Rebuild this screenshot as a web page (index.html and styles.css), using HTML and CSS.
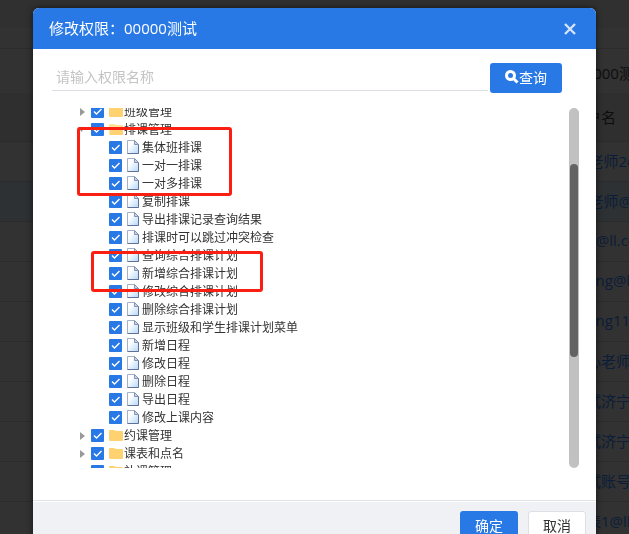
FILE: index.html
```html
<!DOCTYPE html>
<html lang="zh-CN">
<head>
<meta charset="utf-8">
<meta name="viewport" content="width=device-width, initial-scale=1">
<title>修改权限</title>
<link rel="stylesheet" href="styles.css">
</head>
<body>
<div class="page">
  <div class="page-top"></div>
  <div class="page-sub"></div>
  <div class="page-title">00000测试</div>
  <table class="users">
    <thead><tr><th>用户名</th></tr></thead>
    <tbody>
      <tr><td>an老师2@ll.com</td></tr>
      <tr class="current"><td>an老师@ll.com</td></tr>
      <tr><td>abc@ll.com</td></tr>
      <tr><td>zhang@ll.com</td></tr>
      <tr><td>zhang11@ll.com</td></tr>
      <tr><td>小心老师</td></tr>
      <tr><td>测试济宁</td></tr>
      <tr><td>测试济宁</td></tr>
      <tr><td>测试账号</td></tr>
      <tr><td>代表1@ll.com</td></tr>
    </tbody>
  </table>
</div>

<div class="mask">
  <section class="dialog" role="dialog" aria-labelledby="dialog-title">
    <header class="dialog-head">
      <h1 id="dialog-title">修改权限：00000测试</h1>
      <button class="close" type="button" aria-label="关闭"><svg viewBox="0 0 12 12" width="12" height="12"><path d="M1 1l10 10M11 1L1 11"/></svg></button>
    </header>
    <div class="dialog-body">
      <form class="search">
        <input class="search-input" type="text" placeholder="请输入权限名称" aria-label="权限名称">
        <button class="btn btn-primary btn-search" type="button"><svg viewBox="0 0 14 14" width="14" height="14"><circle cx="5.5" cy="5.5" r="4"/><path d="M8.5 8.5l4 4"/></svg>查询</button>
      </form>
      <div class="tree-panel">
        <div class="tree-view"><ul class="tree" id="tree"></ul></div>
        <div class="scrollbar"><div class="thumb"></div></div>
        <div class="mark mark-group"></div>
        <div class="mark mark-item"></div>
      </div>
    </div>
    <footer class="dialog-foot">
      <button class="btn btn-primary" type="button">确定</button>
      <button class="btn btn-plain" type="button">取消</button>
    </footer>
  </section>
</div>
<script src="tree.js"></script>
</body>
</html>
```
FILE: styles.css
```css
* { box-sizing: border-box; }

body {
  margin: 0;
  height: 100vh;
  overflow: hidden;
  background: #323232;
  color: #333;
  font-family: "Open Sans", "Noto Sans CJK SC", sans-serif;
  font-size: 14px;
}

button, input { font: inherit; }

/* Dimmed page behind the dialog */
.page { color: #0d0d0d; font-size: 15px; }
.page-top { height: 28px; background: #303030; }
.page-sub { height: 21px; border-bottom: 1px solid #2c2c2c; }
.page-title { height: 44px; padding-left: 576px; line-height: 48px; white-space: nowrap; }
.users { width: 100%; border-collapse: collapse; table-layout: fixed; }
.users th, .users td {
  height: 40px;
  padding: 0 0 2px 571px;
  border-bottom: 1px solid #2b2b2b;
  overflow: hidden;
  text-align: left;
  font-weight: normal;
  white-space: nowrap;
}
.users th { height: 48px; padding-bottom: 0; background: #2f2f2f; }
.users td { color: #0b1d38; }
.users .current { background: #2d3133; }

/* Dialog */
.mask { position: fixed; inset: 0; padding: 8px 33px 0; }
.dialog {
  background: #fff;
  border-radius: 6px 6px 0 0;
  box-shadow: 0 0 6px rgba(0, 0, 0, .6);
  overflow: hidden;
}
.dialog-head {
  display: flex;
  align-items: center;
  justify-content: space-between;
  height: 41px;
  padding: 0 20px 0 16px;
  background: #2878e6;
  color: #fff;
}
.dialog-head h1 { margin: 0; padding-bottom: 2px; font-size: 15px; font-weight: normal; }
.close { display: flex; padding: 0; border: 0; background: none; }
.close svg { fill: none; stroke: #d4e4fa; stroke-width: 2.4; }

.dialog-body { padding: 14px 17px 32px 19px; }
.search { display: flex; gap: 2px; padding-right: 17px; }
.search-input {
  flex: 1;
  min-width: 0;
  height: 28px;
  padding: 0 4px;
  border: 0;
  border-bottom: 1px solid #dcdfe6;
  outline: none;
  background: none;
  color: #333;
}
.search-input::placeholder { color: #c4c4c4; }

.btn {
  display: flex;
  align-items: center;
  justify-content: center;
  width: 58px;
  height: 30px;
  padding: 0 0 2px;
  border: 0;
  border-radius: 3px;
}
.btn-primary { background: #2878e6; color: #fff; }
.btn-plain { border: 1px solid #dcdfe6; background: #fff; color: #333; }
.btn-search { width: 72px; }
.btn-search svg { fill: none; stroke: #fff; stroke-width: 3; }

/* Permission tree */
.tree-panel { position: relative; display: flex; height: 360px; margin-top: 15px; }
.tree-view { flex: 1; overflow: hidden; }
.tree { margin: -6px 0 0; padding: 0 0 0 26px; list-style: none; }
.tree ul { margin: 0; padding: 0 0 0 18px; list-style: none; }
.node { display: flex; align-items: center; height: 18px; font-size: 12px; white-space: nowrap; }
.node label { display: flex; align-items: center; }
.node svg { flex: none; }
.arrow { width: 13px; height: 10px; }
.arrow path { fill: #999; }
.node input {
  flex: none;
  width: 13px;
  height: 13px;
  margin: 0 5px 0 0;
  appearance: none;
  border-radius: 1px;
  background: #2878e6 url("data:image/svg+xml,%3Csvg xmlns='http://www.w3.org/2000/svg' viewBox='0 0 13 13'%3E%3Cpath d='M3 6.5l2.5 2.5L10.5 4' fill='none' stroke='%23fff' stroke-width='1.4'/%3E%3C/svg%3E");
}
.folder { margin-right: 1px; }
.doc { margin-right: 3px; }

.scrollbar { width: 10px; padding: 56px 1px 0; border-radius: 5px; background: #c1c1c1; }
.thumb { height: 193px; border-radius: 4px; background: #636363; }

/* Highlight frames drawn over the tree */
.mark { position: absolute; border: 3px solid #fb1f12; border-radius: 3px; }
.mark-group { left: 25px; top: 19px; width: 155px; height: 69px; }
.mark-item { left: 39px; top: 143px; width: 172px; height: 41px; }

.dialog-foot {
  display: flex;
  justify-content: flex-end;
  gap: 10px;
  height: 60px;
  padding: 10px 10px 0;
  border-top: 1px solid #dfe2e8;
  background: #f0f1f5;
  box-shadow: inset 0 1px #fff;
}
```
FILE: tree.js
```js
const nodes = [
  { name: "班级管理" },
  { name: "排课管理", open: true, children: [
    "集体班排课", "一对一排课", "一对多排课", "复制排课", "导出排课记录查询结果",
    "排课时可以跳过冲突检查", "查询综合排课计划", "新增综合排课计划", "修改综合排课计划",
    "删除综合排课计划", "显示班级和学生排课计划菜单", "新增日程", "修改日程", "删除日程",
    "导出日程", "修改上课内容"
  ] },
  { name: "约课管理" },
  { name: "课表和点名" },
  { name: "补课管理" }
];

const arrow = open => `<svg class="arrow" viewBox="0 0 13 10"><path d="${open ? "M0 3h7l-3.5 5z" : "M2 2l5 4-5 4z"}"/></svg>`;
const folder = open => `<svg class="folder" width="14" height="12" viewBox="0 0 14 12"><path d="M0 2q0-1 1-1h4l2 1h6q1 0 1 1v8q0 1-1 1H1q-1 0-1-1z" fill="${open ? "#ffe19a" : "#ffd271"}"/>${open ? '<path d="M2 5h12v6q0 1-1 1H1z" fill="#ffd271"/>' : ""}</svg>`;
const doc = `<svg class="doc" width="12" height="14" viewBox="0 0 12 14"><defs><linearGradient id="paper" x2="1" y2="1"><stop offset=".3" stop-color="#fff"/><stop offset="1" stop-color="#b4d8f8"/></linearGradient></defs><path d="M.5.5h7l4 4v9H.5z" fill="url(#paper)" stroke="#a3b0cb"/><path d="M11.5 4.5v9H.5" fill="none" stroke="#5f7099"/><path d="M7.5.5v4h4z" fill="#c9d6ea" stroke="#8493b5"/></svg>`;
const label = (icon, name) => `<label><input type="checkbox" checked>${icon}${name}</label>`;

document.getElementById("tree").innerHTML = nodes.map(n => `<li>
  <div class="node">${arrow(n.open)}${label(folder(n.open), n.name)}</div>
  ${n.children ? `<ul>${n.children.map(c => `<li class="node"><span class="arrow"></span>${label(doc, c)}</li>`).join("")}</ul>` : ""}
</li>`).join("");
```
